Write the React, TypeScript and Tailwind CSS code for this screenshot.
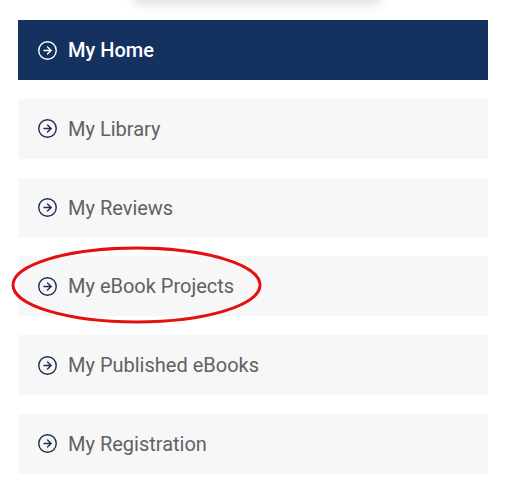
import { CircleArrowRight } from 'lucide-react';

const items = [
  { label: 'My Home', active: true },
  { label: 'My Library' },
  { label: 'My Reviews' },
  { label: 'My eBook Projects', circled: true },
  { label: 'My Published eBooks' },
  { label: 'My Registration' },
];

export default function App() {
  return (
    <div className="relative min-h-[493px] w-[513px] overflow-hidden bg-white font-['Roboto',sans-serif]">
      {/* card above, mostly scrolled off */}
      <div className="mx-auto -mt-10 h-10 w-[246px] rounded-b-md bg-white shadow-[0_4px_12px_rgba(0,0,0,0.14)]" />

      <nav className="mt-[20px] flex flex-col gap-[18.8px] px-[18px]">
        {items.map((item) => (
          <div
            key={item.label}
            className={`relative flex h-[60px] w-[470px] items-center gap-[10px] pl-[19px] ${
              item.active ? 'bg-[#14315f] text-white' : 'bg-[#f7f7f7] text-[#616161]'
            }`}
          >
            <CircleArrowRight
              className={`h-[21px] w-[21px] ${item.active ? 'text-white' : 'text-[#1d2d4c]'}`}
              strokeWidth={1.6}
            />
            <span className={`text-[20px] ${item.active ? 'font-medium' : 'font-normal'}`}>
              {item.label}
            </span>
            {item.circled && (
              <svg
                className="pointer-events-none absolute top-[-10px] left-[-7px] h-[78px] w-[252px]"
                viewBox="0 0 252 78"
              >
                <ellipse cx="125.5" cy="39" rx="123.5" ry="37" fill="none" stroke="#e3100f" strokeWidth="3" />
              </svg>
            )}
          </div>
        ))}
      </nav>
    </div>
  );
}
